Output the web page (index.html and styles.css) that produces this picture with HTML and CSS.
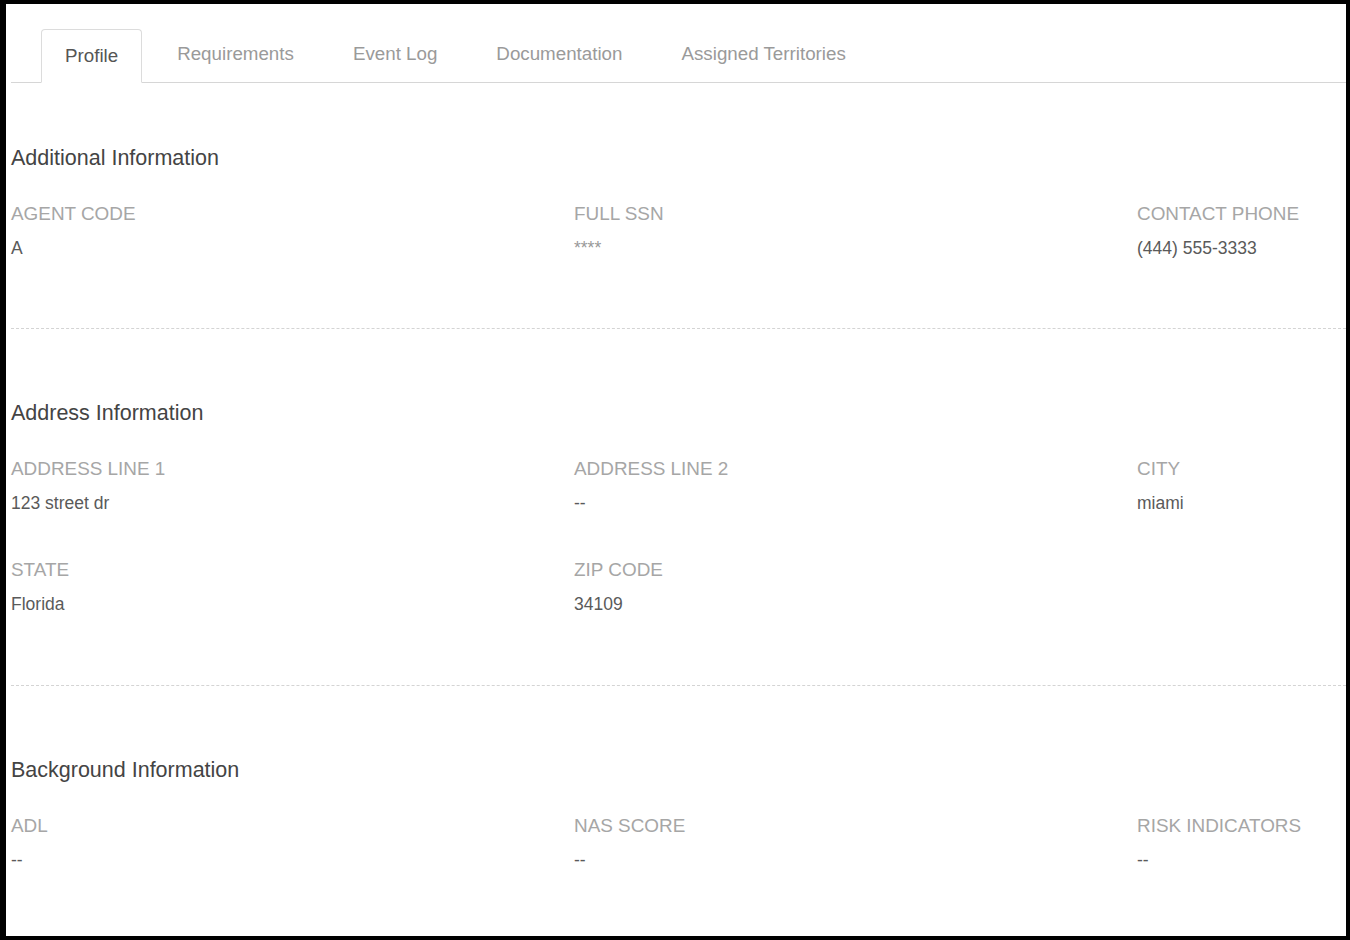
FILE: index.html
```html
<!DOCTYPE html>
<html lang="en">
<head>
  <meta charset="UTF-8">
  <meta name="viewport" content="width=device-width, initial-scale=1.0">
  <title>Agent Profile</title>
  <link rel="stylesheet" href="styles.css">
</head>
<body>
  <div class="frame">
    <ul class="tabs">
      <li class="tab active">Profile</li>
      <li class="tab">Requirements</li>
      <li class="tab">Event Log</li>
      <li class="tab">Documentation</li>
      <li class="tab">Assigned Territories</li>
    </ul>

    <div class="section first">
      <h3>Additional Information</h3>
      <div class="fields">
        <div class="field">
          <div class="label">AGENT CODE</div>
          <div class="value">A</div>
        </div>
        <div class="field">
          <div class="label">FULL SSN</div>
          <div class="value stars">****</div>
        </div>
        <div class="field">
          <div class="label">CONTACT PHONE</div>
          <div class="value">(444) 555-3333</div>
        </div>
      </div>
    </div>

    <div class="section">
      <h3>Address Information</h3>
      <div class="fields">
        <div class="field">
          <div class="label">ADDRESS LINE 1</div>
          <div class="value">123 street dr</div>
        </div>
        <div class="field">
          <div class="label">ADDRESS LINE 2</div>
          <div class="value">--</div>
        </div>
        <div class="field">
          <div class="label">CITY</div>
          <div class="value">miami</div>
        </div>
        <div class="field">
          <div class="label">STATE</div>
          <div class="value">Florida</div>
        </div>
        <div class="field">
          <div class="label">ZIP CODE</div>
          <div class="value">34109</div>
        </div>
      </div>
    </div>

    <div class="section last">
      <h3>Background Information</h3>
      <div class="fields">
        <div class="field">
          <div class="label">ADL</div>
          <div class="value">--</div>
        </div>
        <div class="field">
          <div class="label">NAS SCORE</div>
          <div class="value">--</div>
        </div>
        <div class="field">
          <div class="label">RISK INDICATORS</div>
          <div class="value">--</div>
        </div>
      </div>
    </div>
  </div>
</body>
</html>
```

FILE: styles.css
```css
body {
  margin: 0;
  font-family: "Liberation Sans", Arial, sans-serif;
  background-color: #fff;
}

.frame {
  height: 940px;
  box-sizing: border-box;
  border-style: solid;
  border-color: #000;
  border-width: 4px 4px 4px 6px;
  padding-left: 5px;
  overflow: hidden;
}

/* tab strip */
.tabs {
  display: flex;
  align-items: flex-end;
  list-style: none;
  margin: 25px 0 0;
  padding: 0 0 0 30px;
  border-bottom: 1px solid #d6d6d6;
}

.tab {
  display: flex;
  align-items: center;
  height: 48px;
  padding: 0 23px 4px;
  margin: 0 11px -1px 0;
  border: 1px solid transparent;
  border-radius: 4px 4px 0 0;
  font-size: 18.75px;
  color: #9a9a9a;
}

.tab.active {
  height: 52px;
  padding-bottom: 0;
  border-color: #dcdcdc;
  border-bottom-color: #fff;
  background-color: #fff;
  color: #555;
}

/* sections */
.section {
  padding: 69px 0 68px;
  border-bottom: 1px dashed #d4d4d4;
}

.section.first {
  padding: 60px 0 67px;
}

.section.last {
  border-bottom: none;
}

h3 {
  margin: 0 0 28px;
  font-size: 21.5px;
  font-weight: normal;
  line-height: 30px;
  color: #444;
}

.fields {
  display: grid;
  grid-template-columns: 563px 563px 1fr;
  row-gap: 41px;
}

.label {
  font-size: 18.9px;
  line-height: 26px;
  margin-bottom: 8px;
  color: #a6a6a6;
}

.value {
  font-size: 17.5px;
  line-height: 26px;
  color: #5a5a5a;
}

.value.stars {
  color: #999;
}
```
